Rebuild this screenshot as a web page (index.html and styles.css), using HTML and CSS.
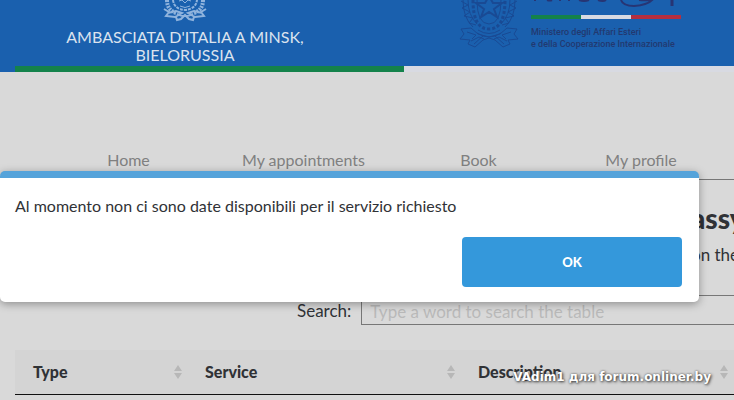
FILE: index.html
```html
<!DOCTYPE html>
<html lang="en">
<head>
<meta charset="utf-8">
<title>Ambasciata d'Italia a Minsk</title>
<link rel="stylesheet" href="styles.css">
</head>
<body>
<header class="header">
  <div class="embassy">
    <svg class="crest" width="46" height="22" viewBox="0 0 46 22" fill="none" stroke="#8fb3dd" aria-hidden="true">
      <path d="M5 0q0 10 9 13M41 0q0 10-9 13" stroke-width="4" stroke-dasharray="2 1"/>
      <path d="M11 0q1 9 12 10q11-1 12-10" stroke-width="2" stroke-dasharray="3 1"/>
      <path d="M17 1l3-1 3 3 3-3 3 1M18 6q5 3 10 0" stroke-width="1"/>
      <path d="M2 9l5 3-3 4 9 1 7-4-6-2-8 2M44 9l-5 3 3 4-9 1-7-4 6-2 8 2M14 17l1 3 4-1 4-4 4 4 4 1 1-3M15 14q8 4 16 0" stroke-width="2"/>
    </svg>
    <div class="embassy-name">AMBASCIATA D'ITALIA A MINSK, BIELORUSSIA</div>
  </div>
  <div class="ministry">
    <svg class="emblem" width="60" height="49" viewBox="0 0 60 49" fill="none" stroke="#194a94" aria-hidden="true">
      <path d="M4 0q0 18 10 27M9 0q0 15 9 24M56 0q0 18-10 27M51 0q0 15-9 24" stroke-width="1"/>
      <path d="M2 1l7 4-6 3 8 4-6 4 9 2-4 5 7 2M58 1l-7 4 6 3-8 4 6 4-9 2 4 5-7 2" stroke-width="1"/>
      <path d="M14 0q0 29 16 29t16-29" stroke-width="3" stroke-dasharray="3 2"/>
      <path d="M18 0q0 24 12 24t12-24" stroke-width="1"/>
      <path d="M17 3h9l4-7 4 7h9l-8 6 3 8-8-5-8 5 3-8z" stroke-width="2"/>
      <path d="M2 29l10-1 7 6 11 3 11-3 7-6 10 1-3 5 4 5-10 1 2 4-7 3-8-7-6-2-6 2-8 7-7-3 2-4-10-1 4-5z" stroke-width="1"/>
      <path d="M8 32l9 3-4 4M52 32l-9 3 4 4M12 41l8-4 5 2M48 41l-8-4-5 2M18 33q12 8 24 0M19 30q11 7 22 0M15 44l9-8M45 44l-9-8" stroke-width="1"/>
    </svg>
    <div class="brand">
      <svg class="signature" width="150" height="8" viewBox="0 0 150 8" fill="none" stroke="#273574" stroke-width="2" aria-hidden="true">
        <path d="M4 0v1M16 0q3 1 5 0M29 0v1M38 0v1M48 0q5 2 10 0M67 0q5 2 8 0"/>
        <path d="M90 0q2 6 13 6q15-1 20-8M108 0q8 1 15-1"/>
        <path d="M141 0v6" stroke-width="3"/>
      </svg>
      <div class="flag"><span class="green"></span><span class="white"></span><span class="red"></span></div>
      <div class="ministry-name">Ministero degli Affari Esteri<br>e della Cooperazione Internazionale</div>
    </div>
  </div>
</header>
<div class="stripe"><span class="green"></span><span class="white"></span></div>

<nav class="nav">
  <a href="#">Home</a>
  <a href="#">My appointments</a>
  <a href="#">Book</a>
  <a href="#">My profile</a>
</nav>

<main>
  <section class="intro">
    <h1>assy</h1>
    <p>on the</p>
  </section>
  <div class="search">
    <label for="search">Search:</label>
    <input id="search" type="text" placeholder="Type a word to search the table">
  </div>
  <table class="services">
    <thead>
      <tr>
        <th class="type"><div class="head">Type <svg class="sort" width="8" height="14" viewBox="0 0 8 14" aria-hidden="true"><path d="M0 6l4-6 4 6zM0 8h8l-4 6z"/></svg></div></th>
        <th><div class="head">Service <svg class="sort" width="8" height="14" viewBox="0 0 8 14" aria-hidden="true"><path d="M0 6l4-6 4 6zM0 8h8l-4 6z"/></svg></div></th>
        <th><div class="head">Description <svg class="sort" width="8" height="14" viewBox="0 0 8 14" aria-hidden="true"><path d="M0 6l4-6 4 6zM0 8h8l-4 6z"/></svg></div></th>
      </tr>
    </thead>
  </table>
</main>

<div class="dialog" role="alertdialog" aria-describedby="message">
  <p id="message">Al momento non ci sono date disponibili per il servizio richiesto</p>
  <button type="button">OK</button>
</div>
<div class="watermark">VAdim1 для forum.onliner.by</div>
</body>
</html>
```
FILE: styles.css
```css
* { box-sizing: border-box; }
html { overflow: hidden; }
body {
  margin: 0;
  min-height: 100vh;
  position: relative;
  overflow: hidden;
  background: #d9d9d9;
  color: #303236;
  font: 17px/24px Lato, "Open Sans", sans-serif;
}
h1, p { margin: 0; }
.header {
  display: grid;
  grid-template-columns: 340px 1fr;
  padding: 0 15px;
  height: 66px;
  background: #1a60ae;
}
.embassy { text-align: center; }
.crest { display: block; margin: 0 auto; }
.embassy-name {
  width: 250px;
  margin: 6px auto 0;
  color: #dbe3ee;
  font-size: 16px;
  line-height: 18px;
}
.ministry { display: flex; gap: 12px; padding-left: 104px; }
.emblem, .brand { flex: none; }
.signature { display: block; }
.flag, .stripe { display: flex; }
.flag { width: 150px; height: 4px; margin-top: 7px; }
.flag span { flex: 1; }
.green { background: #14824b; }
.white { background: #d8dae2; }
.red { background: #b52f40; }
.ministry-name {
  margin-top: 7px;
  color: #223970;
  font: 500 9px/12px Roboto, sans-serif;
  white-space: nowrap;
}
.stripe { height: 6px; background: linear-gradient(90deg, #1a60ae 15px, #d8dae2 15px); padding-left: 15px; }
.stripe .green { width: 54.1%; }
.stripe .white { flex: 1; }
.nav {
  display: grid;
  grid-template-columns: 7fr 7fr 7fr 6fr;
  height: 108px;
  padding: 76px 18px 0 41px;
  border-bottom: 1px solid #777;
  text-align: center;
}
.nav a { color: #808080; font-size: 16px; text-decoration: none; }
.intro { height: 115px; padding: 20px 0 0 691px; white-space: nowrap; }
.intro h1 { font-size: 28px; line-height: 36px; font-weight: 900; }
.intro p { margin-top: 7px; }
.search { display: flex; gap: 10px; padding-left: 297px; }
.search label { padding-top: 4px; }
.search input {
  flex: 1;
  min-width: 0;
  height: 30px;
  padding: 2px 8px 0;
  border: 1px solid #777;
  border-right: 0;
  border-radius: 0;
  background: transparent;
  font: inherit;
}
.search input::placeholder { color: #b9b9b9; opacity: 1; }
.services {
  width: calc(100% - 15px);
  margin: 25px 0 0 15px;
  table-layout: fixed;
  border-collapse: collapse;
}
.services th {
  height: 44px;
  padding: 0 6px 0 17px;
  background: #d4d4d4;
  border-bottom: 1px solid #111;
  font-size: 16px;
  font-weight: 900;
  text-align: left;
}
.services .type { width: 173px; padding-left: 18px; }
.head { display: flex; justify-content: space-between; align-items: center; }
.sort { fill: #b7b7b7; }
.dialog {
  position: absolute;
  top: 171px;
  left: 0;
  right: 35px;
  display: flex;
  flex-direction: column;
  padding: 16px 17px 15px 15px;
  border-top: 7px solid #55a3da;
  border-radius: 5px;
  background: #fff;
  box-shadow: 0 2px 8px rgba(0, 0, 0, .35);
  font-size: 16px;
}
.dialog button {
  align-self: flex-end;
  width: 220px;
  height: 50px;
  margin-top: 19px;
  border: 0;
  border-radius: 4px;
  background: #3498db;
  color: #fff;
  font: 900 13px Lato, sans-serif;
}
.watermark {
  position: absolute;
  top: 368px;
  right: 23px;
  color: #fff;
  font: bold 12px/18px "DejaVu Sans", sans-serif;
  text-shadow: 1px 1px 3px #333, 0 0 2px #666;
}
```
